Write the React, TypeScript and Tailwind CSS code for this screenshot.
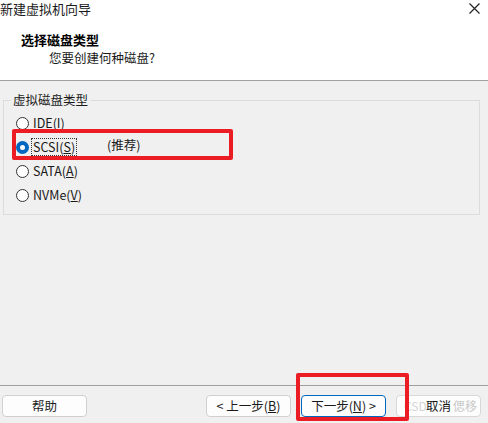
import type { ReactNode } from "react";

const font = { fontFamily: '"Noto Sans CJK SC", "Noto Sans", sans-serif' };

function Radio({ checked, children, focus }: { checked?: boolean; children: ReactNode; focus?: boolean }) {
  return (
    <div className="flex h-[24px] items-center">
      {checked ? (
        <span className="ml-[12px] flex h-[13px] w-[13px] items-center justify-center rounded-full bg-[#0067c0]">
          <span className="h-[5px] w-[5px] rounded-full bg-white" />
        </span>
      ) : (
        <span className="ml-[12px] h-[13px] w-[13px] rounded-full border border-[#333] bg-white" />
      )}
      <span
        className={
          "ml-[3px] px-[1px] text-[12.5px] leading-[16px] text-[#1a1a1a] " +
          (focus ? "outline outline-1 outline-dotted outline-[#333]" : "")
        }
      >
        {children}
      </span>
    </div>
  );
}

function Button({ children, primary, muted }: { children: ReactNode; primary?: boolean; muted?: boolean }) {
  return (
    <button
      className={
        "flex h-[22px] w-[85px] items-center justify-center rounded-[4px] border bg-[#fdfdfd] text-[12.5px] leading-none " +
        (primary ? "border-[#0067c0] text-[#1a1a1a]" : muted ? "border-[#d8d8d8] text-[#1a1a1a]" : "border-[#d0d0d0] text-[#1a1a1a]")
      }
    >
      {children}
    </button>
  );
}

export default function App() {
  return (
    <div className="relative flex h-[423px] w-[488px] flex-col overflow-hidden bg-[#f0f0f0]" style={font}>
      <header className="h-[81px] border-b border-[#a0a0a0] bg-white">
        <div className="flex h-[17px] items-center justify-between">
          <span className="text-[13px] leading-none text-[#1a1a1a]">新建虚拟机向导</span>
          <svg width="11" height="11" viewBox="0 0 11 11" className="mr-[8px] mt-[-1px]">
            <path d="M0.5 0.5 L10.5 10.5 M10.5 0.5 L0.5 10.5" stroke="#222" strokeWidth="1.2" />
          </svg>
        </div>
        <div className="ml-[21px] mt-[15px] text-[13px] font-bold leading-[16px] text-black">选择磁盘类型</div>
        <div className="ml-[49px] mt-[2px] text-[12.5px] leading-[16px] text-[#1a1a1a]">您要创建何种磁盘?</div>
      </header>

      <main className="flex-1">
        <fieldset className="mx-[3px] mr-[8px] mt-[11px] h-[123px] border border-[#dcdcdc]">
          <legend className="ml-[7px] px-[2px] text-[12.5px] leading-[16px] text-[#1a1a1a]">虚拟磁盘类型</legend>
          <div className="mt-[3px] flex flex-col">
            <Radio>
              IDE(<u>I</u>)
            </Radio>
            <Radio checked focus>
              SCSI(<u>S</u>)
            </Radio>
            <Radio>
              SATA(<u>A</u>)
            </Radio>
            <Radio>
              NVMe(<u>V</u>)
            </Radio>
          </div>
        </fieldset>
      </main>

      <footer className="h-[38px] border-t border-[#a0a0a0]">
        <div className="mt-[9px] flex items-center px-[2px]">
          <Button>帮助</Button>
          <div className="ml-auto flex items-center gap-[10px] pr-[5px]">
            <Button>&lt; 上一步(<u>B</u>)</Button>
            <Button primary>下一步(<u>N</u>) &gt;</Button>
            <Button muted>取消</Button>
          </div>
        </div>
      </footer>

      <span className="absolute left-[107px] top-[137px] text-[12.5px] leading-[16px] text-[#1a1a1a]">(推荐)</span>
      <span className="pointer-events-none absolute left-[404px] top-[398px] text-[12px] leading-[16px] text-[#c8c8c8]/80">CSD</span>
      <span className="pointer-events-none absolute left-[453px] top-[398px] text-[12px] leading-[16px] text-[#c8c8c8]">偲移</span>
      <div className="pointer-events-none absolute left-[12px] top-[129px] h-[31px] w-[221px] rounded-[2px] border-[4px] border-[#ec1c24]" />
      <div className="pointer-events-none absolute left-[296px] top-[373px] h-[48px] w-[113px] rounded-[2px] border-[4px] border-[#ec1c24]" />
    </div>
  );
}
